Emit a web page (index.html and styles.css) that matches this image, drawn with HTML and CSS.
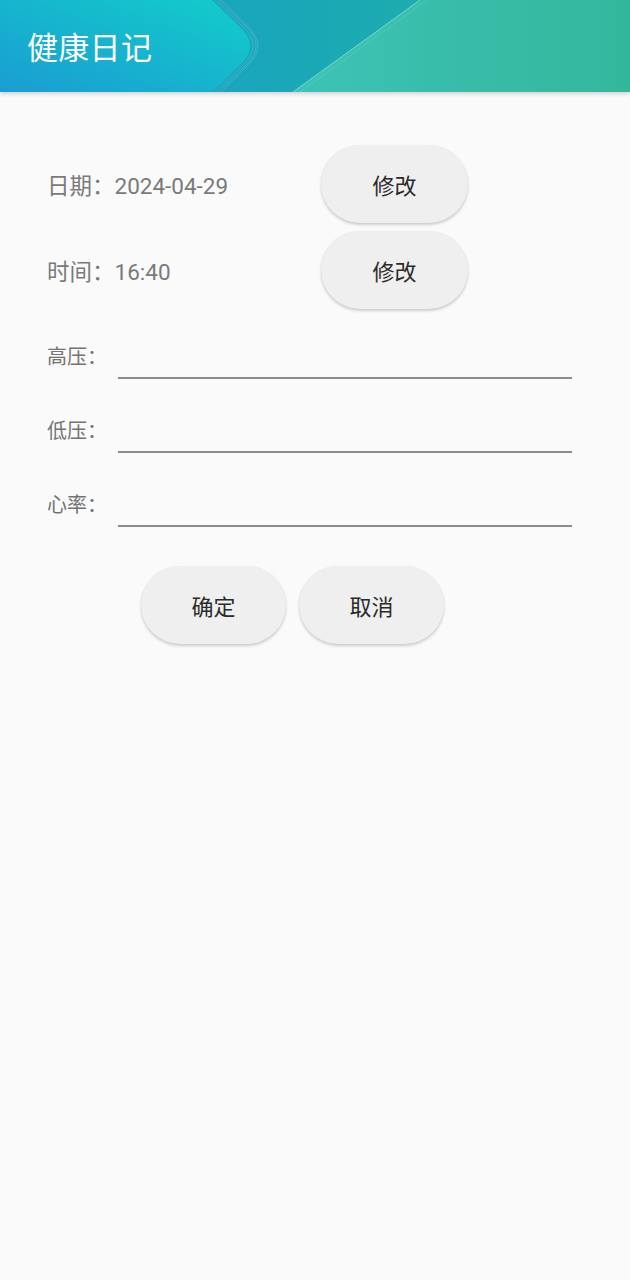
FILE: index.html
```html
<!DOCTYPE html>
<html lang="zh">
<head>
<meta charset="utf-8">
<title>健康日记</title>
<link rel="stylesheet" href="styles.css">
</head>
<body>
<header class="appbar">
  <svg class="appbar-bg" viewBox="0 0 630 92" preserveAspectRatio="none" aria-hidden="true">
    <defs>
      <linearGradient id="gBase" x1="0" y1="0" x2="1" y2="0">
        <stop offset="0" stop-color="#1b9ed2"/>
        <stop offset="0.45" stop-color="#1aa7b8"/>
        <stop offset="1" stop-color="#22b3a0"/>
      </linearGradient>
      <linearGradient id="gLeft" x1="0" y1="1" x2="1" y2="0">
        <stop offset="0" stop-color="#1a9dd2"/>
        <stop offset="1" stop-color="#13cdca"/>
      </linearGradient>
      <linearGradient id="gRight" x1="0" y1="0" x2="1" y2="0">
        <stop offset="0" stop-color="#3ec2b6"/>
        <stop offset="1" stop-color="#33b79c"/>
      </linearGradient>
    </defs>
    <rect x="0" y="0" width="630" height="92" fill="url(#gBase)"/>
    <path d="M293 92 L420 0 H630 V92 Z" fill="url(#gRight)"/>
    <path d="M293 92 L420 0" stroke="#bff0e6" stroke-opacity="0.55" stroke-width="1"/>
    <path d="M300 92 L427 0" stroke="#ffffff" stroke-opacity="0.12" stroke-width="1"/>
    <path d="M0 0 H212 L238 25 Q262 46 238 67 L212 92 H0 Z" fill="url(#gLeft)"/>
    <g fill="none" stroke="#ffffff" stroke-opacity="0.22" stroke-width="0.7">
      <path d="M215 0 L241 25 Q265 46 241 67 L215 92"/>
      <path d="M218 0 L244 25 Q268 46 244 67 L218 92"/>
      <path d="M221 0 L246 25 Q270 46 246 67 L221 92"/>
    </g>
  </svg>
  <h1 class="appbar-title">健康日记</h1>
</header>

<main class="form">
  <section class="pick-rows">
    <div class="pick-row">
      <span class="pick-label">日期：2024-04-29</span>
      <button class="pill">修改</button>
    </div>
    <div class="pick-row">
      <span class="pick-label">时间：16:40</span>
      <button class="pill">修改</button>
    </div>
  </section>

  <section class="fields">
    <label class="field">
      <span class="field-label">高压：</span>
      <span class="field-input"></span>
    </label>
    <label class="field">
      <span class="field-label">低压：</span>
      <span class="field-input"></span>
    </label>
    <label class="field">
      <span class="field-label">心率：</span>
      <span class="field-input"></span>
    </label>
  </section>

  <section class="actions">
    <button class="pill">确定</button>
    <button class="pill">取消</button>
  </section>
</main>
</body>
</html>
```

FILE: styles.css
```css
* { box-sizing: border-box; }

html, body {
  margin: 0;
  padding: 0;
  background: #fafafa;
  font-family: Roboto, "Noto Sans CJK SC", "Noto Sans", sans-serif;
}

body {
  width: 630px;
  min-height: 1280px;
}

.appbar {
  position: relative;
  height: 92px;
  display: flex;
  align-items: center;
  padding-left: 27px;
  box-shadow: 0 2px 4px rgba(0, 0, 0, 0.16);
  overflow: hidden;
}

.appbar-bg {
  position: absolute;
  inset: 0;
  width: 100%;
  height: 100%;
}

.appbar-title {
  position: relative;
  margin: 0;
  font-family: "Noto Sans CJK SC", sans-serif;
  font-weight: 400;
  font-size: 31px;
  color: #ffffff;
  letter-spacing: 0.3px;
  line-height: 1;
  padding-bottom: 2px;
}

.form {
  padding-top: 53px;
}

.pick-rows {
  display: flex;
  flex-direction: column;
  gap: 8px;
  padding-left: 47px;
}

.pick-row {
  display: flex;
  align-items: center;
  height: 78px;
}

.pick-label {
  width: 274px;
  font-size: 22.5px;
  color: #7a7a7a;
}

.pill {
  width: 147px;
  height: 78px;
  border: none;
  border-radius: 39px;
  background: #efefef;
  color: #2a2a2a;
  font-family: "Noto Sans CJK SC", sans-serif;
  font-size: 22px;
  padding: 0;
  box-shadow: 0 2px 3px rgba(0, 0, 0, 0.18), 0 0 1px rgba(0, 0, 0, 0.08);
}

.fields {
  display: flex;
  flex-direction: column;
  gap: 29px;
  padding: 25px 58px 0 47px;
}

.field {
  display: flex;
  align-items: center;
  height: 45px;
}

.field-label {
  width: 71px;
  font-size: 20px;
  color: #737373;
  font-family: "Noto Sans CJK SC", sans-serif;
  padding-bottom: 2px;
}

.field-input {
  flex: 1;
  height: 45px;
  border-bottom: 2px solid #8c8c8c;
}

.actions {
  display: flex;
  gap: 13px;
  padding: 39px 0 0 141px;
}

.actions .pill {
  width: 145px;
}
```
